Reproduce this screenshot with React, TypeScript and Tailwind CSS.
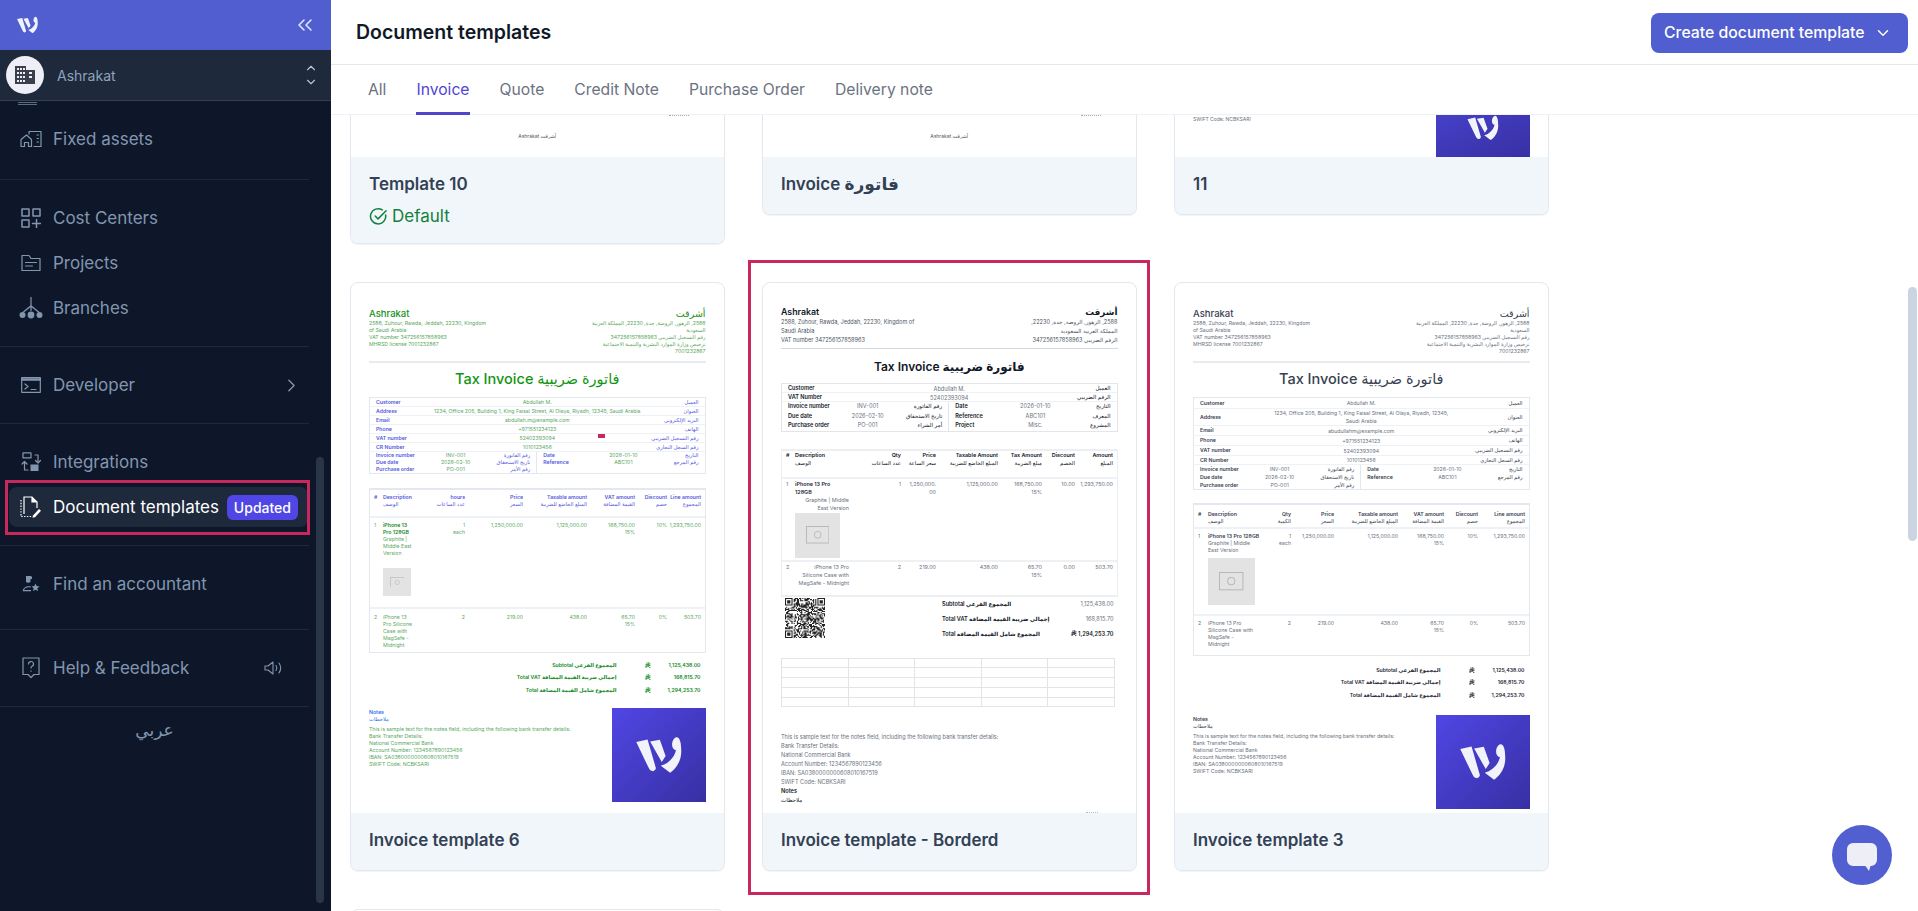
import type { ReactNode } from "react"
import { ChevronDown, ChevronRight, ChevronUp, ChevronsLeft } from "lucide-react"

function LogoMark({ className }: { className?: string }) {
  return (
    <svg viewBox="20 38 155 118" className={className} fill="currentColor">
      <path d="M27 57 L62 49 L88 138 Q85 150 74 146 Q68 144 65 136 Z" />
      <path d="M70 55 L100 50 L118 100 L106 119 Z" />
      <path d="M166 75 C170 112 152 138 132 152 L103 130 C125 125 145 105 150 82 C134 80 134 50 150 42 C160 39 166 55 166 75 Z" />
    </svg>
  )
}

const stroke = { fill: "none", stroke: "currentColor", strokeWidth: 1.5, strokeLinecap: "round", strokeLinejoin: "round" } as const

const FixedAssetsIcon = () => (
  <svg viewBox="0 0 22 18" className="h-[18px] w-[22px]" {...stroke} strokeWidth={1.2}>
    <path d="M1 16.5V9.5L6.5 5l5 4.5v7H8.5v-4h-4v4z" />
    <path d="M9 4V1.5h12v15h-7" />
    <path d="M17 5h1.5M17 8.5h1.5M17 12h1.5" />
  </svg>
)
const CostCentersIcon = () => (
  <svg viewBox="0 0 20 20" className="h-[20px] w-[20px]" {...stroke}>
    <rect x="1" y="1" width="7" height="7" />
    <rect x="12" y="1" width="7" height="7" />
    <rect x="1" y="12" width="7" height="7" />
    <path d="M15.5 11.5v8M11.5 15.5h8" />
  </svg>
)
const ProjectsIcon = () => (
  <svg viewBox="0 0 20 18" className="h-[18px] w-[20px]" {...stroke} strokeWidth={1.2}>
    <path d="M1 16.5V1.5h7l2 3h9v12z" />
    <path d="M4.5 8.5h11M4.5 12h7" />
  </svg>
)
const BranchesIcon = () => (
  <svg viewBox="0 0 24 22" className="h-[22px] w-[24px]" fill="currentColor">
    <path d="M11.4 0h1.2v8.5l8 6.5-.8 1-7.2-5.8V14h-1.2v-3.8L4.2 16l-.8-1 8-6.5z" />
    <circle cx="3.5" cy="18" r="3" />
    <circle cx="12" cy="18" r="3.4" />
    <circle cx="20.5" cy="18" r="3" />
  </svg>
)
const DeveloperIcon = () => (
  <svg viewBox="0 0 20 16" className="h-[16px] w-[20px]" {...stroke} strokeWidth={1.2}>
    <rect x="0.7" y="0.7" width="18.6" height="14.6" />
    <path d="M0.7 2.5h18.6" strokeWidth={2.4} />
    <path d="M4 7l3 2.5L4 12M10 12.5h5" />
  </svg>
)
const IntegrationsIcon = () => (
  <svg viewBox="0 0 20 20" className="h-[20px] w-[20px]" {...stroke} strokeWidth={1.2}>
    <rect x="2" y="0.8" width="8" height="5" />
    <path d="M14 3h3v8M14.5 8.5L17 11l2.5-2.5" />
    <path d="M3.5 18V9.5M1 12l2.5-2.5L6 12M3.5 18H7" />
    <rect x="9.5" y="12.5" width="8" height="6.5" fill="currentColor" stroke="none" />
  </svg>
)
const DocumentIcon = () => (
  <svg viewBox="0 0 22 22" className="h-[22px] w-[22px] text-white" fill="none" stroke="currentColor" strokeWidth={1.2}>
    <path d="M1 4v16.5h11" strokeDasharray="1.4 1.4" />
    <path d="M4 18V1h8l5 5v6" />
    <path d="M12 1v5h5" fill="currentColor" />
    <path d="M13 19.5l6-6.5 2 1.8-6 6.5-2.5.5z" fill="currentColor" stroke="none" />
  </svg>
)
const AccountantIcon = () => (
  <svg viewBox="0 0 18 16" className="h-[16px] w-[18px]" fill="currentColor">
    <path d="M4 0h5l1 1v2H8.5v2.5a3 3 0 0 1-4.5.5z" />
    <path d="M0.8 15.2c0-3 2.8-5 6-5 .8 0 1.6.1 2.2.4l-.6 1C7.900 11.400 7.300 11.300 6.800 11.300c-2.500 0-4.500 1.300-4.800 2.800H9v1.100z" />
    <path d="M13.500 7.500l1.200 2.600 2.800.3-2.100 1.900.6 2.800-2.500-1.400-2.500 1.400.6-2.800-2.100-1.900 2.800-.3z" />
  </svg>
)
const HelpIcon = () => (
  <svg viewBox="0 0 18 22" className="h-[22px] w-[18px]" {...stroke} strokeWidth={1.2}>
    <path d="M1 1h16v16.500h-5L9 20.500l-3-3H1z" />
    <path d="M6.500 7a2.500 2.500 0 1 1 3.500 2.300c-.7.400-1 .8-1 1.700" />
    <path d="M9 13.800v.4" />
  </svg>
)
const SpeakerIcon = () => (
  <svg viewBox="0 0 20 14" className="h-[14px] w-[20px]" {...stroke} strokeWidth={1.1}>
    <path d="M1 5h3l5-4v12L4 9H1z" />
    <path d="M12 4.500c1 1.500 1 3.500 0 5M15 2c2 3 2 7 0 10" />
  </svg>
)
const BuildingIcon = () => (
  <svg viewBox="0 0 20 18" className="h-[18px] w-[20px] text-[#3a3f4c]" fill="currentColor">
    <path fillRule="evenodd" d="M0 0h11v4h9v14H0zM2 2v2h2V2zm3 0v2h2V2zm3 0v2h2V2zM2 6v2h2V6zm3 0v2h2V6zm3 0v2h2V6zM2 10v2h2v-2zm3 0v2h2v-2zm3 0v2h2v-2zM2 14v2h2v-2zm3 0v2h2v-2zm3 0v2h2v-2zm6-8v2h3V6zm0 4v2h3v-2z" />
  </svg>
)
const RiyalIcon = () => (
  <svg viewBox="0 0 12 12" className="inline-block h-[6px] w-[6px] align-[-0.5px]" fill="none" stroke="currentColor" strokeWidth={1.5}>
    <path d="M4 0.500v9.500l-3 1M7.500 0v10" />
    <path d="M0.500 6l10.500-2.500M0.500 9l10.500-2.500M8 11.500l3-1" />
  </svg>
)

function NavItem({ icon, label, active, right }: { icon: ReactNode; label: string; active?: boolean; right?: ReactNode }) {
  return (
    <div className={`flex h-[40px] items-center rounded-lg pl-[9px] ${active ? "bg-[#1e293b] text-white" : "text-[#8296b0]"}`}>
      <span className="flex w-[26px] shrink-0 justify-center">{icon}</span>
      <span className="ml-[9px] text-[17px] leading-none">{label}</span>
      {right}
    </div>
  )
}

function NavGroup({ children, className = "py-[18px]" }: { children: ReactNode; className?: string }) {
  return <div className={`flex w-[309px] flex-col gap-[5px] border-b border-[#1e293b] pl-[9px] pr-px ${className}`}>{children}</div>
}

function Sidebar() {
  return (
    <aside className="relative flex h-full w-[331px] shrink-0 flex-col overflow-hidden bg-[#0e1729]">
      <div className="flex h-[50px] shrink-0 items-center justify-between bg-[#505ed0] pl-[16px] pr-[14px] text-[#e4e7f8]">
        <LogoMark className="h-[18px] w-[23px] text-[#f2f2fb]" />
        <ChevronsLeft size={24} strokeWidth={1.5} />
      </div>
      <div className="flex h-[51px] shrink-0 items-center border-b border-[#334155] bg-[#1e293b] pl-[6px] pr-[13px]">
        <span className="flex h-[38px] w-[38px] items-center justify-center rounded-full bg-[#eeeef6]">
          <BuildingIcon />
        </span>
        <span className="ml-[13px] text-[14px] text-[#8fa3bd]">Ashrakat</span>
        <span className="ml-auto flex flex-col text-[#b6c2d2]">
          <ChevronUp size={14} strokeWidth={2} />
          <ChevronDown size={14} strokeWidth={2} />
        </span>
      </div>
      <nav className="relative min-h-0 flex-1 overflow-hidden">
        <span className="absolute left-[18px] top-[1px] h-[3px] w-[19px] border-y border-[#5d6c82]" />
        <NavGroup className="pb-[20px] pt-[18px]">
          <NavItem icon={<FixedAssetsIcon />} label="Fixed assets" />
        </NavGroup>
        <NavGroup>
          <NavItem icon={<CostCentersIcon />} label="Cost Centers" />
          <NavItem icon={<ProjectsIcon />} label="Projects" />
          <NavItem icon={<BranchesIcon />} label="Branches" />
        </NavGroup>
        <NavGroup>
          <NavItem icon={<DeveloperIcon />} label="Developer" right={<ChevronRight size={21} strokeWidth={1.6} className="ml-auto mr-[6px]" />} />
        </NavGroup>
        <NavGroup>
          <NavItem icon={<IntegrationsIcon />} label="Integrations" />
          <NavItem
            icon={<DocumentIcon />}
            label="Document templates"
            active
            right={
              <span className="ml-auto mr-[10px] rounded-md bg-[#4f46e5] px-[7px] py-[4px] text-[14px] font-medium leading-[17px] text-white">Updated</span>
            }
          />
        </NavGroup>
        <NavGroup className="pb-[25px] pt-[18px]">
          <NavItem icon={<AccountantIcon />} label="Find an accountant" />
        </NavGroup>
        <NavGroup>
          <NavItem icon={<HelpIcon />} label="Help & Feedback" right={<span className="ml-auto mr-[24px]"><SpeakerIcon /></span>} />
        </NavGroup>
        <div className="w-[309px] pt-[11px] text-center text-[17px] text-[#8296b0]">عربي</div>
      </nav>
      <span className="absolute left-[316px] top-[457px] h-[446px] w-[8px] rounded-full bg-[#293548]" />
      <span className="absolute left-[5px] top-[480px] h-[55px] w-[305px] border-[3px] border-[#c9285e]" />
    </aside>
  )
}

type Theme = {
  name: string
  sub: string
  title: string
  label: string
  value: string
  notes: string
  strong: string
}

const greenTheme: Theme = {
  name: "text-[#16921c]",
  sub: "text-[#57a85c]",
  title: "text-[#129512]",
  label: "text-[#5457e0]",
  value: "text-[#5aa864]",
  notes: "text-[#2f6ff0]",
  strong: "text-[#128a1e]",
}
const greyTheme: Theme = {
  name: "text-[#374151]",
  sub: "text-[#6b7280]",
  title: "text-[#374151]",
  label: "text-[#374151]",
  value: "text-[#6b7280]",
  notes: "text-[#374151]",
  strong: "text-[#1f2937]",
}
const blackTheme: Theme = {
  name: "text-[#111827]",
  sub: "text-[#4b5563]",
  title: "text-[#111827]",
  label: "text-[#111827]",
  value: "text-[#6b7280]",
  notes: "text-[#111827]",
  strong: "text-[#111827]",
}

const ARABIC_ADDRESS = ["2588, الزهور, الروضة, جدة, 22230, المملكة العربية", "السعودية", "رقم التسجيل الضريبي 347256157858963", "ترخيص وزارة الموارد البشرية والتنمية الاجتماعية", "7001232867"]
const NOTE_LINES = [
  "This is sample text for the notes field, including the following bank transfer details:",
  "Bank Transfer Details:",
  "National Commercial Bank",
  "Account Number: 1234567890123456",
  "IBAN: SA0380000000608010167519",
  "SWIFT Code: NCBKSARI",
]

function InfoRow({ theme, label, value, ar, className = "h-[9px]" }: { theme: Theme; label: string; value: string; ar: string; className?: string }) {
  return (
    <div className={`grid grid-cols-[56px_1fr_56px] items-center border-b border-[#eef1f5] px-[6px] ${className}`}>
      <span className={`whitespace-nowrap font-semibold ${theme.label}`}>{label}</span>
      <span className={`whitespace-pre text-center leading-[8px] ${theme.value}`}>{value}</span>
      <span className={`whitespace-nowrap ${theme.label}`} dir="rtl">{ar}</span>
    </div>
  )
}

function SplitRow({ theme, label, value, ar, className = "h-[7px]" }: { theme: Theme; label: string; value: string; ar: string; className?: string }) {
  return (
    <div className={`grid grid-cols-[50px_1fr_45px] items-center ${className}`}>
      <span className={`whitespace-nowrap font-semibold ${theme.label}`}>{label}</span>
      <span className={`whitespace-nowrap text-center ${theme.value}`}>{value}</span>
      <span className={`whitespace-nowrap ${theme.label}`} dir="rtl">{ar}</span>
    </div>
  )
}

function ImagePlaceholder({ className }: { className: string }) {
  return (
    <div className={`flex items-center justify-center bg-[#e3e3e3] ${className}`}>
      <svg viewBox="0 0 24 18" className="w-[52%] text-[#b9b9b9]" fill="none" stroke="currentColor" strokeWidth={1}>
        <rect x="0.500" y="0.500" width="23" height="17" />
        <circle cx="12" cy="9" r="3.500" />
      </svg>
    </div>
  )
}

type Header = { en: string; ar?: string }

function TableHeader({ theme, heads, grid, className }: { theme: Theme; heads: Header[]; grid: string; className: string }) {
  return (
    <div className={`grid border-b-2 border-[#eef1f5] ${grid} ${className}`}>
      {heads.map((h, i) => (
        <div key={h.en} className={`${i < 2 ? "text-left" : "text-right"} ${i === 0 ? "pl-[4px]" : i === 7 ? "pr-[5px]" : "pr-[2px]"}`}>
          <div className={`font-semibold ${theme.label}`}>{h.en}</div>
          {h.ar && <div className={theme.label} dir="rtl">{h.ar}</div>}
        </div>
      ))}
    </div>
  )
}

function AmountCells({ theme, cells }: { theme: Theme; cells: string[][] }) {
  return (
    <>
      {cells.map((c, i) => (
        <div key={i} className={`whitespace-nowrap text-right ${theme.value} ${i === cells.length - 1 ? "pr-[5px]" : "pr-[2px]"}`}>
          {c.map((t) => (
            <div key={t}>{t}</div>
          ))}
        </div>
      ))}
    </>
  )
}

function Totals({ theme, className, rows }: { theme: Theme; className: string; rows: [string, string][] }) {
  return (
    <div className={`flex flex-col font-semibold ${className}`}>
      {rows.map(([label, amount]) => (
        <div key={label} className="grid h-[12.500px] grid-cols-[1fr_34px_50px] items-center pr-[5px]">
          <span className={`whitespace-nowrap text-right ${theme.strong}`}>{label}</span>
          <span className={`text-right ${theme.strong}`}><RiyalIcon /></span>
          <span className={`text-right ${theme.strong}`}>{amount}</span>
        </div>
      ))}
    </div>
  )
}

function DocLogo({ className = "" }: { className?: string }) {
  return (
    <div className={`flex h-[94px] w-[94px] shrink-0 items-center justify-center bg-gradient-to-br from-[#5046e5] to-[#3730a3] ${className}`}>
      <LogoMark className="h-[40px] w-[50px] text-[#f2f2fb]" />
    </div>
  )
}

const GRID_A = "grid-cols-[13px_36px_48px_58px_64px_48px_32px_37px]"
const GRID_C = "grid-cols-[14px_52px_33px_43px_64px_46px_34px_50px]"
const GRID_B = "grid-cols-[13px_60px_48px_35px_62px_44px_33px_41px]"

function SimpleDoc({ theme, variant }: { theme: Theme; variant: "green" | "grey" }) {
  const green = variant === "green"
  const grid = green ? GRID_A : GRID_C
  const split = green ? "h-[7px]" : "h-[8px]"
  const secondItem = green
    ? ["iPhone 13", "Pro Silicone", "Case with", "MagSafe -", "Midnight"]
    : ["iPhone 13 Pro", "Silicone Case with", "MagSafe -", "Midnight"]
  return (
    <div className="px-[18px] pt-[25px] text-[5.200px] leading-[7px]">
      <div className="flex justify-between">
        <div>
          <div className={`h-[12px] text-[9.500px] font-medium leading-[12px] ${theme.name}`}>Ashrakat</div>
          <div className={`text-[5.200px] ${theme.sub}`}>
            <div>2588, Zuhour, Rawda, Jeddah, 22230, Kingdom</div>
            <div>of Saudi Arabia</div>
            <div>VAT number 347256157858963</div>
            <div>MHRSD license 7001232867</div>
          </div>
        </div>
        <div className="text-right" dir="rtl">
          <div className={`h-[12px] text-[9.500px] font-medium leading-[12px] ${theme.name}`} dir="rtl">أشرقت</div>
          <div className={theme.sub}>
            {ARABIC_ADDRESS.map((l) => (
              <div key={l}>{l}</div>
            ))}
          </div>
        </div>
      </div>
      <div className="mt-[6px] h-[2px] bg-[#e8ebf0]" />
      <div className={`flex h-[31px] items-center justify-center text-[14.500px] font-medium ${theme.title}`}>Tax Invoice فاتورة ضريبية</div>
      <div className="relative mt-[3px] border border-[#e3e8ef]">
        <InfoRow theme={theme} label="Customer" value="Abdullah M." ar="العميل" className={green ? "h-[9px]" : "h-[11px]"} />
        <InfoRow
          theme={theme}
          label="Address"
          value={green ? "1234, Office 205, Building 1, King Faisal Street, Al Olaya, Riyadh, 12345, Saudi Arabia" : "1234, Office 205, Building 1, King Faisal Street, Al Olaya, Riyadh, 12345,\nSaudi Arabia"}
          ar="العنوان"
          className={green ? "h-[9px]" : "h-[17px]"}
        />
        <InfoRow theme={theme} label="Email" value={green ? "abdullah.m@example.com" : "abudullahm@example.com"} ar="البريد الإلكتروني" className={green ? "h-[9px]" : "h-[10px]"} />
        <InfoRow theme={theme} label="Phone" value="+971551234123" ar="الهاتف" className={green ? "h-[9px]" : "h-[10px]"} />
        <InfoRow theme={theme} label="VAT number" value="52402393094" ar="رقم التسجيل الضريبي" className={green ? "h-[9px]" : "h-[10px]"} />
        <InfoRow theme={theme} label="CR Number" value="1010123456" ar="رقم السجل التجاري" className="h-[9px]" />
        <div className="grid grid-cols-2">
          <div className="border-r border-[#e3e8ef] px-[6px]">
            <SplitRow theme={theme} label="Invoice number" value="INV-001" ar="رقم الفاتورة" className={split} />
            <SplitRow theme={theme} label="Due date" value="2026-02-10" ar="تاريخ الاستحقاق" className={split} />
            <SplitRow theme={theme} label="Purchase order" value="PO-001" ar="رقم الأمر" className={split} />
          </div>
          <div className="px-[6px]">
            <SplitRow theme={theme} label="Date" value="2026-01-10" ar="التاريخ" className={split} />
            <SplitRow theme={theme} label="Reference" value="ABC101" ar="رقم المرجع" className={split} />
          </div>
        </div>
        {green && <span className="absolute left-[228px] top-[36px] h-[4px] w-[7px] bg-[#c9285e]" />}
      </div>

      <div className={`border border-t-2 border-[#e3e8ef] ${green ? "mt-[14px]" : "mt-[13px]"}`}>
        <TableHeader
          theme={theme}
          grid={grid}
          className={green ? "h-[28px] pt-[4px]" : "h-[24px] pt-[6px]"}
          heads={[
            { en: "#" },
            { en: "Description", ar: "الوصف" },
            { en: green ? "hours" : "Qty", ar: green ? "عدد الساعات" : "الكمية" },
            { en: "Price", ar: "السعر" },
            { en: "Taxable amount", ar: "المبلغ الخاضع للضريبة" },
            { en: "VAT amount", ar: "القيمة المضافة" },
            { en: "Discount", ar: "خصم" },
            { en: "Line amount", ar: "المجموع" },
          ]}
        />
        <div className={`grid border-b-2 border-[#eef1f5] ${grid} ${green ? "h-[91px] pt-[4px]" : "h-[87px] pt-[4px]"}`}>
          <div className={`pl-[4px] ${theme.value}`}>1</div>
          <div className={green ? "pr-[5px]" : ""}>
            <div className={`font-semibold ${green ? theme.strong : theme.label}`}>iPhone 13 Pro 128GB</div>
            <div className={theme.value}>Graphite | Middle East Version</div>
            <ImagePlaceholder className={green ? "mt-[11px] h-[28px] w-[28px]" : "mt-[4px] h-[47px] w-[47px]"} />
          </div>
          <AmountCells
            theme={theme}
            cells={[["1", "each"], ["1,250,000.00"], ["1,125,000.00"], ["168,750.00", "15%"], ["10%"], ["1,293,750.00"]]}
          />
        </div>
        <div className={`grid ${grid} ${green ? "h-[43px] pt-[5px]" : "h-[39px] pt-[4px]"}`}>
          <div className={`pl-[4px] ${theme.value}`}>2</div>
          <div className={`whitespace-nowrap ${theme.value}`}>
            {secondItem.map((l) => (
              <div key={l}>{l}</div>
            ))}
          </div>
          <AmountCells theme={theme} cells={[["2"], ["219.00"], ["438.00"], ["65.70", "15%"], ["0%"], ["503.70"]]} />
        </div>
      </div>

      <Totals
        theme={theme}
        className={green ? "mt-[6px]" : "mt-[8px]"}
        rows={[
          ["Subtotal المجموع الفرعي", "1,125,438.00"],
          ["Total VAT إجمالي ضريبة القيمة المضافة", "168,815.70"],
          ["Total المجموع شامل القيمة المضافة", "1,294,253.70"],
        ]}
      />

      <div className={`flex justify-between gap-[40px] ${green ? "mt-[11px]" : "mt-[13px]"}`}>
        <div className="pt-[1px]">
          <div className={`font-semibold ${theme.notes}`}>Notes</div>
          <div className={`w-fit ${theme.notes}`}>ملاحظات</div>
          <div className={`mt-[3px] whitespace-nowrap ${theme.value}`}>
            {NOTE_LINES.map((l) => (
              <div key={l}>{l}</div>
            ))}
          </div>
        </div>
        <DocLogo />
      </div>
    </div>
  )
}

function BorderedInfo({ label, value, ar }: { label: string; value: string; ar: string }) {
  return <SplitRow theme={blackTheme} label={label} value={value} ar={ar} className="h-[9.500px]" />
}

// deterministic noise so the code looks the same on every load
function qrPath() {
  const size = 37
  let d = ""
  const inFinder = (x: number, y: number) => (x < 8 && y < 8) || (x > size - 9 && y < 8) || (x < 8 && y > size - 9)
  for (let y = 0; y < size; y++) {
    for (let x = 0; x < size; x++) {
      if (inFinder(x, y)) continue
      const n = Math.sin(x * 12.9898 + y * 78.233) * 43758.5453
      if (n - Math.floor(n) > 0.5) d += `M${x} ${y}h1v1h-1z`
    }
  }
  return d
}

function QrCode() {
  return (
    <svg viewBox="0 0 37 37" className="ml-[4px] mt-[1px] h-[40px] w-[40px] shrink-0">
      <path fill="#222" d="M0 0h7v7H0zM30 0h7v7h-7zM0 30h7v7H0z" />
      <path fill="#fff" d="M1 1h5v5H1zM31 1h5v5h-5zM1 31h5v5H1z" />
      <path fill="#222" d="M2 2h3v3H2zM32 2h3v3h-3zM2 32h3v3H2z" />
      <path fill="#222" d={qrPath()} />
    </svg>
  )
}

function BorderedDoc() {
  const t = blackTheme
  return (
    <div className="relative h-full overflow-hidden px-[18px] pt-[23px] text-[5.600px] leading-[9px]">
      <div className="flex justify-between border-b border-[#d6d8dc] pb-[3px]">
        <div>
          <div className="h-[12px] text-[8.800px] font-semibold leading-[12px] text-[#111827]">Ashrakat</div>
          <div className={t.sub}>
            <div>2588, Zuhour, Rawda, Jeddah, 22230, Kingdom of</div>
            <div>Saudi Arabia</div>
            <div>VAT number 347256157858963</div>
          </div>
        </div>
        <div className={`text-right ${t.sub}`} dir="rtl">
          <div className="h-[12px] text-[8.800px] font-semibold leading-[12px] text-[#111827]">أشرقت</div>
          <div>2588, الزهور, الروضة, جدة, 22230,</div>
          <div>المملكة العربية السعودية</div>
          <div>الرقم الضريبي 347256157858963</div>
        </div>
      </div>
      <div className="flex h-[34px] items-center justify-center text-[12px] font-semibold text-[#111827]">Tax Invoice فاتورة ضريبية</div>
      <div className="border border-[#e3e5e8]">
        <InfoRow theme={t} label="Customer" value="Abdullah M." ar="العميل" />
        <InfoRow theme={t} label="VAT Number" value="52402393094" ar="الرقم الضريبي" />
        <div className="grid grid-cols-2">
          <div className="border-r border-[#e3e5e8] px-[6px]">
            <BorderedInfo label="Invoice number" value="INV-001" ar="رقم الفاتورة" />
            <BorderedInfo label="Due date" value="2026-02-10" ar="تاريخ الاستحقاق" />
            <BorderedInfo label="Purchase order" value="PO-001" ar="أمر الشراء" />
          </div>
          <div className="px-[6px]">
            <BorderedInfo label="Date" value="2026-01-10" ar="التاريخ" />
            <BorderedInfo label="Reference" value="ABC101" ar="المعرف" />
            <BorderedInfo label="Project" value="Misc." ar="المشروع" />
          </div>
        </div>
      </div>

      <div className="mt-[17px] border-x border-b-2 border-t-2 border-[#eceef1] text-[5.400px] leading-[8px]">
        <TableHeader
          theme={t}
          grid={GRID_B}
          className="h-[28px]"
          heads={[
            { en: "#" },
            { en: "Description", ar: "الوصف" },
            { en: "Qty", ar: "عدد الساعات" },
            { en: "Price", ar: "سعر الساعة" },
            { en: "Taxable Amount", ar: "المبلغ الخاضع للضريبة" },
            { en: "Tax Amount", ar: "مبلغ الضريبة" },
            { en: "Discount", ar: "الخصم" },
            { en: "Amount", ar: "المبلغ" },
          ]}
        />
        <div className={`grid border-b-2 border-[#eef0f3] ${GRID_B} h-[83px] pt-[1px]`}>
          <div className="pl-[4px] text-[#6b7280]">1</div>
          <div className="pr-[6px]">
            <div className="w-[42px] font-semibold text-[#1f2937]">iPhone 13 Pro 128GB</div>
            <div className="text-right text-[#6b7280]">Graphite | Middle East Version</div>
            <ImagePlaceholder className="mt-[1px] h-[45px] w-[45px]" />
          </div>
          <AmountCells
            theme={t}
            cells={[["1"], ["1,250,000.", "00"], ["1,125,000.00"], ["168,750.00", "15%"], ["10.00"], ["1,293,750.00"]]}
          />
        </div>
        <div className={`grid ${GRID_B} h-[33px] pt-[1px]`}>
          <div className="pl-[4px] text-[#6b7280]">2</div>
          <div className="pr-[6px] text-right text-[#6b7280]">iPhone 13 Pro Silicone Case with MagSafe - Midnight</div>
          <AmountCells theme={t} cells={[["2"], ["219.00"], ["438.00"], ["65.70", "15%"], ["0.00"], ["503.70"]]} />
        </div>
      </div>

      <div className="flex text-[5.600px]">
        <QrCode />
        <div className="ml-[117px] flex flex-1 flex-col pt-[1px]">
          <div className="flex h-[14px] items-center justify-between pr-[4px]">
            <span className="font-semibold text-[#111827]">Subtotal المجموع الفرعي</span>
            <span className="text-[#6b7280]">1,125,438.00</span>
          </div>
          <div className="flex h-[15px] items-center justify-between pr-[4px]">
            <span className="font-semibold text-[#111827]">Total VAT إجمالي ضريبة القيمة المضافة</span>
            <span className="text-[#6b7280]">168,815.70</span>
          </div>
          <div className="flex h-[15px] items-center justify-between pr-[4px]">
            <span className="font-semibold text-[#111827]">Total المجموع شامل القيمة المضافة</span>
            <span className="font-semibold text-[#111827]"><RiyalIcon /> 1,294,253.70</span>
          </div>
        </div>
      </div>

      <div className="mr-[3px] mt-[16px] grid grid-cols-5 border-l border-t border-[#e4e4e4]">
        {Array.from({ length: 25 }).map((_, i) => (
          <div key={i} className="h-[9.800px] border-b border-r border-[#e4e4e4]" />
        ))}
      </div>

      <div className="mt-[26px] text-[#6b7280]">
        {NOTE_LINES.map((l) => (
          <div key={l} className="whitespace-nowrap">{l}</div>
        ))}
        <div className="font-semibold text-[#111827]">Notes</div>
        <div className="w-fit text-[#111827]">ملاحظات</div>
      </div>
      <span className="absolute bottom-0 left-[323px] h-px w-[12px] border-t border-dotted border-[#bdbdbd]" />
    </div>
  )
}

function Card({ title, preview, children, height = "h-[530px]", className = "" }: { title?: ReactNode; preview?: ReactNode; children?: ReactNode; height?: string; className?: string }) {
  return (
    <div className={`self-start overflow-hidden rounded-lg border border-[#e2e8f0] bg-white shadow-[0_1px_1px_rgba(15,23,42,0.05)] ${className}`}>
      <div className={`overflow-hidden ${height}`}>{preview}</div>
      <div className="bg-[#f1f6fa] px-[18px] pb-[19px] pt-[16px]">
        <div className="text-[17px] font-semibold leading-[22px] text-[#334155]">{title}</div>
        {children}
      </div>
    </div>
  )
}

function ClippedFooterPreview() {
  return (
    <div className="relative h-full">
      <span className="absolute right-[35px] top-0 h-px w-[20px] border-t border-dotted border-[#aaa]" />
      <div className="pt-[17px] text-center text-[5px] leading-[9px] text-[#555]">Ashrakat أشرقت</div>
    </div>
  )
}

export default function App() {
  const tabs = ["All", "Invoice", "Quote", "Credit Note", "Purchase Order", "Delivery note"]
  return (
    <div className="flex h-[911px] w-[1918px] overflow-hidden bg-white [font-family:Inter,'DejaVu_Sans',sans-serif]">
      <Sidebar />
      <main className="relative flex min-w-0 flex-1 flex-col">
        <header className="flex h-[65px] shrink-0 items-center justify-between border-b border-[#e2e8f0] pl-[25px] pr-[10px] pt-[2px]">
          <h1 className="text-[19.500px] font-semibold text-[#111827]">Document templates</h1>
          <button className="flex h-[40px] w-[257px] items-center rounded-lg bg-[#505ed0] pl-[13px] text-[15.800px] font-medium text-white">
            Create document template
            <ChevronDown size={18} strokeWidth={2} className="ml-[9px]" />
          </button>
        </header>
        <div className="flex h-[50px] shrink-0 gap-[30px] border-b border-[#eef1f5] pl-[37px]">
          {tabs.map((t) => (
            <div
              key={t}
              className={`flex h-[50px] items-center border-b-[3px] pt-[3px] text-[15.700px] ${t === "Invoice" ? "border-[#4f46c9] text-[#4f46d5]" : "border-transparent text-[#6b7280]"}`}
            >
              {t}
            </div>
          ))}
        </div>
        <div className="min-h-0 flex-1 overflow-hidden">
          <div className="grid grid-cols-[374.500px_374.500px_374.500px] gap-x-[37.500px] gap-y-[38px] pl-[19px]">
            <Card title="Template 10" height="h-[42px]" preview={<ClippedFooterPreview />} className="rounded-t-none border-t-0">
              <div className="-mb-[2px] mt-[11px] flex items-center gap-[4px] text-[17px] leading-[20px] text-[#15803d]">
                <svg viewBox="0 0 20 20" className="h-[19px] w-[19px]" fill="none" stroke="currentColor" strokeWidth={1.6} strokeLinecap="round" strokeLinejoin="round">
                  <path d="M17.500 8.500a8 8 0 1 1-3.500-5.400" />
                  <path d="M6.500 9.500l3 3L18 4" />
                </svg>
                Default
              </div>
            </Card>
            <Card title="Invoice فاتورة" height="h-[42px]" preview={<ClippedFooterPreview />} className="rounded-t-none border-t-0" />
            <Card
              title="11"
              height="h-[42px]"
              className="rounded-t-none border-t-0"
              preview={
                <div className="flex justify-between px-[18px]">
                  <div className="pt-[1px] text-[5px] leading-[7px] text-[#6b7280]">SWIFT Code: NCBKSARI</div>
                  <div className="flex h-[42px] w-[94px] items-start justify-center overflow-hidden bg-gradient-to-br from-[#4640c8] to-[#3730a3]">
                    <LogoMark className="h-[26px] w-[40px] text-[#f2f2fb]" />
                  </div>
                </div>
              }
            />
            <Card title="Invoice template 6" preview={<SimpleDoc theme={greenTheme} variant="green" />} />
            <Card title="Invoice template - Borderd" preview={<BorderedDoc />} />
            <Card title="Invoice template 3" preview={<SimpleDoc theme={greyTheme} variant="grey" />} />
            <Card height="h-[40px]" />
          </div>
        </div>
        <span className="absolute left-[417px] top-[260px] h-[635px] w-[402px] border-[3px] border-[#c9285e]" />
        <span className="absolute right-[1px] top-[287px] h-[254px] w-[9px] rounded-full bg-[#cbd5e1]" />
        <button className="absolute left-[1501px] top-[825px] flex h-[60px] w-[60px] items-center justify-center rounded-full bg-[#525fd1]">
          <svg viewBox="0 0 30 28" className="h-[28px] w-[30px] translate-y-[2px]" fill="#eeeef7">
            <path d="M6 0h18a6 6 0 0 1 6 6v11a6 6 0 0 1-6 6h-.5l-1.500 5-3.500-5H6a6 6 0 0 1-6-6V6a6 6 0 0 1 6-6z" />
          </svg>
        </button>
      </main>
    </div>
  )
}
